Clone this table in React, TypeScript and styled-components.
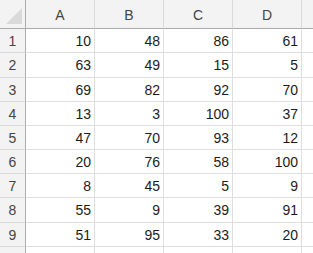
import React from "react";
import styled, { createGlobalStyle } from "styled-components";

const GlobalStyle = createGlobalStyle`
  html, body {
    margin: 0;
    padding: 0;
    background: #ffffff;
    overflow: hidden;
  }
`

const rowHeights = [29, 24, 25, 24, 24, 24, 24, 24, 25, 24, 24];

const Sheet = styled.div`
  display: grid;
  grid-template-columns: 26px repeat(5, 69px);
  grid-template-rows: ${rowHeights.map((h) => h + "px").join(" ")};
  font-family: "Liberation Sans", Arial, sans-serif;
  font-size: 14px;
  width: 313px;
  height: 253px;
  overflow: hidden;
`

const HeaderBase = styled.div`
  box-sizing: border-box;
  background: #f3f3f3;
  color: #454545;
  display: flex;
  align-items: center;
  justify-content: center;
`

const Corner = styled(HeaderBase)`
  border-right: 1px solid #ababab;
  border-bottom: 1px solid #ababab;
  align-items: flex-end;
  justify-content: flex-end;
  padding: 0 3px 4px 0;
`

const ColHeader = styled(HeaderBase)`
  border-bottom: 1px solid #ababab;
  border-right: 1px solid #dadada;
  padding-top: 2px;
`

const RowHeader = styled(HeaderBase)`
  border-right: 1px solid #ababab;
  border-bottom: 1px solid #dadada;
`

const Cell = styled.div`
  box-sizing: border-box;
  border-right: 1px solid #dedede;
  border-bottom: 1px solid #dedede;
  display: flex;
  align-items: center;
  justify-content: flex-end;
  padding-right: 3px;
  color: #1c1c1c;
`

const columns = ["A", "B", "C", "D", ""];

const data: number[][] = [
  [10, 48, 86, 61],
  [63, 49, 15, 5],
  [69, 82, 92, 70],
  [13, 3, 100, 37],
  [47, 70, 93, 12],
  [20, 76, 58, 100],
  [8, 45, 5, 9],
  [55, 9, 39, 91],
  [51, 95, 33, 20],
  [],
];

function CornerMark() {
  return (
    <svg width="16" height="16" viewBox="0 0 16 16">
      <polygon points="16,0 16,16 0,16" fill="#dadada" />
    </svg>
  );
}

export default function App() {
  return (
    <>
      <GlobalStyle />
      <Sheet>
        <Corner>
          <CornerMark />
        </Corner>
        {columns.map((c, i) => (
          <ColHeader key={"h" + i}>{c}</ColHeader>
        ))}
        {data.map((row, r) => (
          <React.Fragment key={r}>
            <RowHeader>{r + 1}</RowHeader>
            {columns.map((_, c) => (
              <Cell key={c}>{row[c] ?? ""}</Cell>
            ))}
          </React.Fragment>
        ))}
      </Sheet>
    </>
  );
}
